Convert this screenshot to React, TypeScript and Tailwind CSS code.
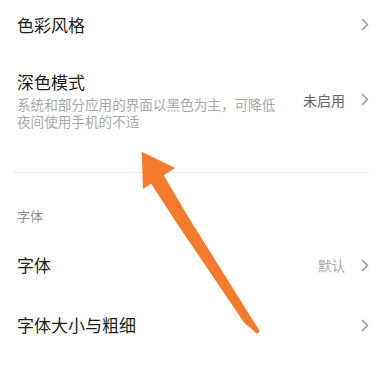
import React from "react";

const font = { fontFamily: '"Noto Sans CJK SC", "Noto Sans", sans-serif' };

function Chevron() {
  return (
    <svg width="8" height="13" viewBox="0 0 8 13" className="shrink-0">
      <path d="M1.5 1.5 L6.5 6.5 L1.5 11.5" fill="none" stroke="#9e9e9e" strokeWidth="1.7" strokeLinecap="round" strokeLinejoin="round" />
    </svg>
  );
}

export default function App() {
  return (
    <div className="relative w-[382px] h-[382px] overflow-hidden bg-white" style={font}>
      <div className="flex flex-col">
        <div className="h-[49px] flex items-center justify-between pl-[17px] pr-[13px]">
          <span className="text-[17px] leading-[22px] text-[#1c1c1c]">色彩风格</span>
          <Chevron />
        </div>

        <div className="flex items-center justify-between pl-[17px] pr-[13px] pt-[22px] pb-[42px]">
          <div className="flex flex-col">
            <span className="text-[17px] leading-[22px] text-[#1c1c1c]">深色模式</span>
            <div className="mt-[3px] flex flex-col text-[13.6px] leading-[17px] text-[#a8a8a8] whitespace-nowrap">
              <span>系统和部分应用的界面以黑色为主，可降低</span>
              <span>夜间使用手机的不适</span>
            </div>
          </div>
          <div className="flex items-center gap-[16px] mb-[2px]">
            <span className="text-[14px] leading-[18px] text-[#666666]">未启用</span>
            <Chevron />
          </div>
        </div>

        <div className="h-px bg-[#ececec] mx-[13px]" />

        <div className="pl-[17px] pt-[29px] pb-[9px]">
          <span className="text-[13px] leading-[18px] text-[#8c8f94]">字体</span>
        </div>

        <div className="h-[60px] flex items-center justify-between pl-[17px] pr-[13px]">
          <span className="text-[17px] leading-[22px] text-[#1c1c1c]">字体</span>
          <div className="flex items-center gap-[16px]">
            <span className="text-[13.5px] leading-[18px] text-[#a8a8a8]">默认</span>
            <Chevron />
          </div>
        </div>

        <div className="h-[60px] flex items-center justify-between pl-[17px] pr-[13px]">
          <span className="text-[17px] leading-[22px] text-[#1c1c1c]">字体大小与粗细</span>
          <Chevron />
        </div>

        <div className="h-px bg-[#e6e6e6] mx-[13px] mt-[27px]" />
      </div>

      <svg className="absolute inset-0 pointer-events-none" width="382" height="382" viewBox="0 0 382 382">
        <polygon points="141.7,151.7 175,168 143,189" fill="#f47a2e" />
        <path
          d="M163 174 L188 216.6 L251.5 318 L259.5 330.5 Q259 334.5 256 333 L244 322.5 L177 223.5 L150 182 Z"
          fill="#f47a2e"
        />
      </svg>
    </div>
  );
}
